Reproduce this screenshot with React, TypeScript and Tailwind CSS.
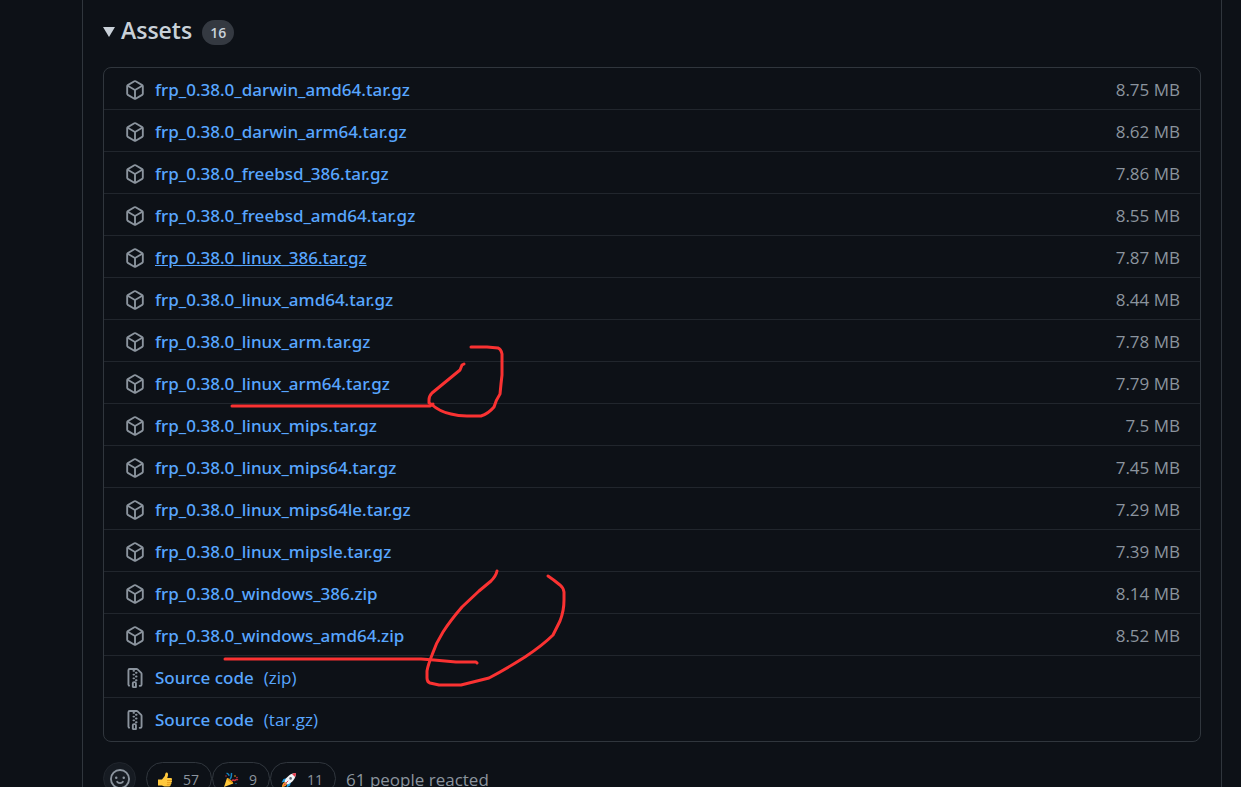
interface Asset {
  name: string;
  size?: string;
  format?: string;
  hovered?: boolean;
}

const assets: Asset[] = [
  { name: "frp_0.38.0_darwin_amd64.tar.gz", size: "8.75 MB" },
  { name: "frp_0.38.0_darwin_arm64.tar.gz", size: "8.62 MB" },
  { name: "frp_0.38.0_freebsd_386.tar.gz", size: "7.86 MB" },
  { name: "frp_0.38.0_freebsd_amd64.tar.gz", size: "8.55 MB" },
  { name: "frp_0.38.0_linux_386.tar.gz", size: "7.87 MB", hovered: true },
  { name: "frp_0.38.0_linux_amd64.tar.gz", size: "8.44 MB" },
  { name: "frp_0.38.0_linux_arm.tar.gz", size: "7.78 MB" },
  { name: "frp_0.38.0_linux_arm64.tar.gz", size: "7.79 MB" },
  { name: "frp_0.38.0_linux_mips.tar.gz", size: "7.5 MB" },
  { name: "frp_0.38.0_linux_mips64.tar.gz", size: "7.45 MB" },
  { name: "frp_0.38.0_linux_mips64le.tar.gz", size: "7.29 MB" },
  { name: "frp_0.38.0_linux_mipsle.tar.gz", size: "7.39 MB" },
  { name: "frp_0.38.0_windows_386.zip", size: "8.14 MB" },
  { name: "frp_0.38.0_windows_amd64.zip", size: "8.52 MB" },
  { name: "Source code", format: "(zip)" },
  { name: "Source code", format: "(tar.gz)" },
];

function Octicon({ d }: { d: string }) {
  return (
    <svg viewBox="0 0 16 16" className="h-5 w-5 shrink-0 fill-[#8b949e]" aria-hidden="true">
      <path fillRule="evenodd" d={d} />
    </svg>
  );
}

const packagePath =
  "M8.878.392a1.75 1.75 0 00-1.756 0l-5.25 3.045A1.75 1.75 0 001 4.951v6.098c0 .624.332 1.2.872 1.514l5.25 3.045a1.75 1.75 0 001.756 0l5.25-3.045c.54-.313.872-.89.872-1.514V4.951c0-.624-.332-1.2-.872-1.514L8.878.392zM7.875 1.69a.25.25 0 01.25 0l4.63 2.685L8 7.133 3.245 4.375l4.63-2.685zM2.5 5.677v5.372c0 .09.047.171.125.216l4.625 2.683V8.432L2.5 5.677zm6.25 8.271l4.625-2.683a.25.25 0 00.125-.216V5.677L8.75 8.432v5.516z";

const fileZipPath =
  "M3.5 1.75a.25.25 0 01.25-.25h3a.75.75 0 000 1.5h.5a.75.75 0 000-1.5h2.086a.25.25 0 01.177.073l2.914 2.914a.25.25 0 01.073.177v8.586a.25.25 0 01-.25.25h-.5a.75.75 0 000 1.5h.5A1.75 1.75 0 0014 13.25V4.664c0-.464-.184-.909-.513-1.237L10.573.513A1.75 1.75 0 009.336 0H3.75A1.75 1.75 0 002 1.75v11.5c0 .649.353 1.214.874 1.515a.75.75 0 10.752-1.298.25.25 0 01-.126-.217V1.75zM8.75 3a.75.75 0 000 1.5h.5a.75.75 0 000-1.5h-.5zM6 5.25a.75.75 0 01.75-.75h.5a.75.75 0 010 1.5h-.5A.75.75 0 016 5.25zm2 1.5A.75.75 0 018.75 6h.5a.75.75 0 010 1.5h-.5A.75.75 0 018 6.75zm-1.25.75a.75.75 0 000 1.5h.5a.75.75 0 000-1.5h-.5zM8 9.75A.75.75 0 018.75 9h.5a.75.75 0 010 1.5h-.5A.75.75 0 018 9.75zm-.75.75a1.75 1.75 0 00-1.75 1.75v3c0 .414.336.75.75.75h2.5a.75.75 0 00.75-.75v-3a1.75 1.75 0 00-1.75-1.75h-.5zM7 12.25a.25.25 0 01.25-.25h.5a.25.25 0 01.25.25v2.25H7v-2.25z";

const smileyPath =
  "M1.5 8a6.5 6.5 0 1113 0 6.5 6.5 0 01-13 0zM8 0a8 8 0 100 16A8 8 0 008 0zM5 8a1 1 0 100-2 1 1 0 000 2zm7-1a1 1 0 11-2 0 1 1 0 012 0zM5.32 9.636a.75.75 0 011.038.175l.007.009c.103.118.22.222.35.31.264.178.683.37 1.285.37.602 0 1.02-.192 1.285-.371.13-.088.247-.192.35-.31l.007-.008a.75.75 0 111.222.87c-.057.078-.12.15-.184.213-.16.166-.338.316-.53.445-.63.418-1.37.638-2.127.629-.946 0-1.652-.308-2.126-.63a3.32 3.32 0 01-.715-.657.75.75 0 01.183-1.044z";

function AssetRow({ asset }: { asset: Asset }) {
  return (
    <li className="flex items-center border-t border-[#21262d] pt-[9px] pr-5 pb-[7px] pl-[21px] leading-[25px] first:border-t-0 last:pb-[9px]">
      <Octicon d={asset.format ? fileZipPath : packagePath} />
      <a
        href="#"
        className={`ml-[10px] text-[#58a6ff] hover:underline ${asset.hovered ? "underline" : ""}`}
      >
        <span className="font-['Noto_Sans','Open_Sans',sans-serif] font-medium">{asset.name}</span>
        {asset.format && <span className="ml-[10px]">{asset.format}</span>}
      </a>
      {asset.size && <span className="ml-auto text-[#8b949e]">{asset.size}</span>}
    </li>
  );
}

function ThumbsUp() {
  return (
    <svg viewBox="0 0 16 16" className="h-4 w-4" aria-hidden="true">
      <path
        d="M1 7.5h4L7.8 4l.6-2.6C8.7.2 10.7.3 11 2c.2 1.4-.5 3-.8 4h3.6c1.5 0 1.7 1.9.6 2.3 1 .5.8 2-.3 2.3.7.6.4 1.9-.6 2.1.3.9-.3 1.7-1.4 1.7H7.5c-1.2 0-1.8-.6-2.5-.9H1z"
        fill="#ffc83d"
      />
      <path d="M10 8.5h4M10 10.7h3.7M9.8 12.7h3" stroke="#d67d00" strokeWidth=".6" />
    </svg>
  );
}

function PartyPopper() {
  return (
    <svg viewBox="0 0 16 16" className="h-4 w-4" aria-hidden="true">
      <path d="M1 15 4 6c2 .6 5.7 3.2 6.2 5.4z" fill="#ffc83d" />
      <path d="M4 6c2 .6 5.7 3.2 6.2 5.4C7.5 11 4.5 8.6 4 6z" fill="#e59a12" />
      <path d="M6.8 7C9.2 5.5 8 3.8 8.6 1" fill="none" stroke="#1787c4" strokeWidth="1.5" />
      <path d="M3.5 1.5c2-.5 1.5 1.5 3 2" fill="none" stroke="#1787c4" strokeWidth="1.3" />
      <path d="M9 9c1.2-2.5 2.5.5 3.6-1 .7-1 1.5-.6 2.4 0" fill="none" stroke="#d32f3f" strokeWidth="1.5" />
      <circle cx="12" cy="4" r=".8" fill="#f4a81d" />
      <circle cx="3" cy="4" r=".7" fill="#d32f3f" />
      <circle cx="14" cy="5.6" r=".8" fill="#d32f3f" />
      <circle cx="13" cy="11.6" r=".7" fill="#1787c4" />
    </svg>
  );
}

function Rocket() {
  return (
    <svg viewBox="0 0 16 16" className="h-4 w-4" aria-hidden="true">
      <path d="M6 6 2.500 7 .5 10.500l4-1zM10 10l-1 3.500L5.500 15.500l1-4z" fill="#1c9be0" />
      <path d="M4 10c-2 .5-3 3-3 5 2 0 4.500-1 5-3z" fill="#ffb02e" />
      <path d="M3.600 11.200 5 12.500 2 14z" fill="#e8394a" />
      <path d="M3.500 9.500C5 5 9.500 1.200 15 1c-.2 5.500-4 10-8.500 11.500z" fill="#f1f4f7" />
      <path d="M11 1.900C12.300 1.300 13.600 1.100 15 1c0 1.400-.3 2.800-.9 4z" fill="#e8394a" />
      <circle cx="9.600" cy="6.400" r="1.300" fill="#5d6875" />
      <path d="m4.600 11.400 2.600-2.600" stroke="#e8394a" strokeWidth="1" />
    </svg>
  );
}

const reactions = [
  { label: "thumbs up", count: 57, Icon: ThumbsUp },
  { label: "hooray", count: 9, Icon: PartyPopper },
  { label: "rocket", count: 11, Icon: Rocket },
];

// Red pen marks drawn over the list
function PenMarks() {
  return (
    <svg
      width="1241"
      height="787"
      viewBox="0 0 1241 787"
      className="pointer-events-none absolute top-0 left-0 fill-none stroke-[#fa3232] stroke-3"
      strokeLinecap="round"
      strokeLinejoin="round"
      aria-hidden="true"
    >
      <path d="M232 406H430L433 404" />
      <path d="M464 364L462 365L460 370L432 393Q429 396 429 400V403L431 404Q440 412 451 414Q458 416 467 416H481Q488 414 494 407Q496 400 500 394L501 384L502 375V354Q501 349 498 348L487 347H471" />
      <path d="M225 659H421L434 660L456 662H476L477 663" />
      <path d="M497 571Q496 576 491 581L479 591L462 607Q450 621 443 632Q436 643 432 655Q428 665 427 671V678Q427 682 430 683L439 685H461L489 678Q506 669 525 657Q543 645 553 635L560 621Q564 611 564 600V592Q563 587 560 585Q554 580 548 576" />
    </svg>
  );
}

export default function App() {
  return (
    <div className="relative h-screen overflow-hidden bg-[#0d1117] font-['Open_Sans','Noto_Sans',sans-serif] text-[17px] text-[#c9d1d9]">
      <main className="mr-[19px] ml-[82px] min-h-full border-x border-[#30363d] px-5 pt-3">
        <details open>
          <summary className="flex cursor-pointer list-none items-center">
            <svg viewBox="0 0 12 10" className="mt-1 mr-[6px] h-[10px] w-3 fill-[#c9d1d9]" aria-hidden="true">
              <path d="M0 0h12L6 10z" />
            </svg>
            <h3 className="text-[23px] leading-9 font-semibold">Assets</h3>
            <span className="mt-1 ml-[10px] rounded-full bg-[#343941] px-2 text-[14px] leading-[25px] font-semibold">
              16
            </span>
          </summary>
          <ul className="mt-[19px] rounded-lg border border-[#30363d]">
            {assets.map((asset) => (
              <AssetRow key={asset.name + asset.format} asset={asset} />
            ))}
          </ul>
        </details>

        {/* Reactions */}
        <div className="mt-5 flex items-center">
          <button
            type="button"
            aria-label="Add reaction"
            className="mr-[10px] flex h-[33px] w-[33px] items-center justify-center rounded-full border border-[#21262d] bg-[#161b22]"
          >
            <Octicon d={smileyPath} />
          </button>
          {reactions.map(({ label, count, Icon }) => (
            <button
              key={label}
              type="button"
              aria-label={label}
              className="flex h-[33px] items-center gap-[10px] rounded-full border border-[#30363d] pt-[2px] pr-3 pl-[10px] text-[14px] text-[#8b949e]"
            >
              <Icon />
              <span>{count}</span>
            </button>
          ))}
          <span className="ml-[10px] pt-[3px] text-[#8b949e]">61 people reacted</span>
        </div>
      </main>
      <PenMarks />
    </div>
  );
}
